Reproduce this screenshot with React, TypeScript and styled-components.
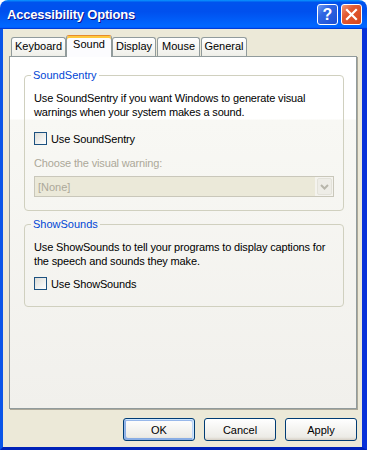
import React from 'react';
import styled, { createGlobalStyle } from 'styled-components';

const GlobalStyle = createGlobalStyle`
  html, body {
    margin: 0;
    padding: 0;
    background: #ffffff;
  }
  body {
    font-family: 'Liberation Sans', Arial, sans-serif;
    font-size: 11px;
    color: #000;
  }
`;

const tabs = [
  { label: 'Keyboard', width: 55, gap: 0 },
  { label: 'Sound', width: 46, gap: 0, active: true },
  { label: 'Display', width: 44, gap: 0 },
  { label: 'Mouse', width: 43, gap: 1 },
  { label: 'General', width: 46, gap: 1 },
];

const App = (): JSX.Element => {
  return (
    <>
      <GlobalStyle />
      <Window>
        <TitleBar>
          <Title>Accessibility Options</Title>
          <Controls>
            <CaptionButton type="button" $kind="help">?</CaptionButton>
            <CaptionButton type="button" $kind="close">
              <svg width="13" height="13" viewBox="0 0 13 13">
                <path d="M2 2 L11 11 M11 2 L2 11" stroke="#fff" strokeWidth="2.2" strokeLinecap="square" />
              </svg>
            </CaptionButton>
          </Controls>
        </TitleBar>

        <Body>
          <TabRow>
            {tabs.map((t) => (
              <Tab key={t.label} $w={t.width} $gap={t.gap} $active={t.active}>
                {t.label}
              </Tab>
            ))}
          </TabRow>

          <Panel>
            <Group $top={12} $bottom={13}>
              <Legend>SoundSentry</Legend>
              <Desc>
                Use SoundSentry if you want Windows to generate visual
                <br />
                warnings when your system makes a sound.
              </Desc>
              <CheckRow $top={13}>
                <CheckBox />
                <span>Use SoundSentry</span>
              </CheckRow>
              <DisabledLabel>Choose the visual warning:</DisabledLabel>
              <Combo>
                <ComboField>[None]</ComboField>
                <ComboButton>
                  <svg width="9" height="6" viewBox="0 0 9 6">
                    <path d="M1 1 L4.5 4.5 L8 1" fill="none" stroke="#b8b6ab" strokeWidth="2" />
                  </svg>
                </ComboButton>
              </Combo>
            </Group>

            <Group $top={7} $bottom={16}>
              <Legend>ShowSounds</Legend>
              <Desc>
                Use ShowSounds to tell your programs to display captions for
                <br />
                the speech and sounds they make.
              </Desc>
              <CheckRow $top={9}>
                <CheckBox />
                <span>Use ShowSounds</span>
              </CheckRow>
            </Group>
          </Panel>

          <ButtonRow>
            <Button type="button" $default>OK</Button>
            <Button type="button">Cancel</Button>
            <Button type="button">Apply</Button>
          </ButtonRow>
        </Body>
      </Window>
    </>
  );
};

const Window = styled.div`
  width: 367px;
  height: 450px;
  display: flex;
  flex-direction: column;
`;

const TitleBar = styled.div`
  height: 29px;
  flex: none;
  display: flex;
  align-items: center;
  padding: 0 5px 0 7px;
  box-sizing: border-box;
  border-radius: 8px 8px 0 0;
  background: linear-gradient(
    180deg,
    #0997ff,
    #0053ee 8%,
    #0050ee 40%,
    #0066ff 88%,
    #0066ff 93%,
    #005bff 95%,
    #003dd7 96%,
    #003dd7
  );
`;

const Title = styled.div`
  flex: 1;
  color: #fff;
  font-family: 'Liberation Sans', Arial, sans-serif;
  font-weight: bold;
  font-size: 13px;
  letter-spacing: -0.2px;
  text-shadow: 1px 1px #0f1089;
`;

const Controls = styled.div`
  display: flex;
  gap: 3px;
`;

const CaptionButton = styled.button<{ $kind: 'help' | 'close' }>`
  width: 21px;
  height: 21px;
  padding: 0;
  border: 1px solid #fff;
  border-radius: 3px;
  display: flex;
  align-items: center;
  justify-content: center;
  color: #fff;
  font-family: 'Liberation Sans', Arial, sans-serif;
  font-weight: bold;
  font-size: 16px;
  background: ${(p) =>
    p.$kind === 'close'
      ? 'linear-gradient(135deg, #f09a7c 0%, #e35a33 35%, #d6461b 100%)'
      : 'linear-gradient(135deg, #6f9bf2 0%, #2f66e3 35%, #1c4fd3 100%)'};
`;

const Body = styled.div`
  flex: 1;
  display: flex;
  flex-direction: column;
  background: #ece9d8;
  border-style: solid;
  border-width: 0 5px 3px 3px;
  border-color: #0842d8 #0831d9 #0022b8 #0a55e8;
  padding: 6px 5px 6px 6px;
  min-height: 0;
`;

const TabRow = styled.div`
  height: 21px;
  flex: none;
  display: flex;
  align-items: flex-end;
  padding-left: 2px;
  position: relative;
  z-index: 1;
`;

const Tab = styled.div<{ $w: number; $gap: number; $active?: boolean }>`
  width: ${(p) => p.$w}px;
  margin-left: ${(p) => p.$gap}px;
  box-sizing: border-box;
  height: ${(p) => (p.$active ? 22 : 19)}px;
  margin-bottom: ${(p) => (p.$active ? -1 : 0)}px;
  padding-top: 2px;
  line-height: 13px;
  text-align: center;
  border: 1px solid #919b9c;
  border-bottom: none;
  border-radius: 3px 3px 0 0;
  ${(p) =>
    p.$active
      ? `
    background: #fcfcfe;
    border-top-color: #e68b2c;
    box-shadow: inset 0 2px #ffc83c;
  `
      : `
    background: linear-gradient(180deg, #fff, #fafaf9 26%, #f0f0ea 95%, #ecebe5);
  `}
`;

const Panel = styled.div`
  flex: 1;
  display: flex;
  flex-direction: column;
  border: 1px solid #919b9c;
  box-shadow: 1px 1px 0 #aca899;
  padding-left: 14px;
  background: linear-gradient(
    180deg,
    #ffffff 0,
    #ffffff 62px,
    #f8f8f4 63px,
    #f1f0ec 100%
  );
`;

const Group = styled.fieldset<{ $top: number; $bottom: number }>`
  width: 320px;
  min-width: 0;
  box-sizing: border-box;
  margin: ${(p) => p.$top}px 0 0 0;
  padding: 0 0 ${(p) => p.$bottom}px 9px;
  border: 1px solid #d0d0bf;
  border-radius: 4px;
`;

const Legend = styled.legend`
  color: #0046d5;
  padding: 0 2px;
  margin-left: -3px;
  line-height: 13px;
`;

const Desc = styled.p`
  margin: 9px 0 0;
  line-height: 14px;
  letter-spacing: -0.15px;
`;

const CheckRow = styled.div<{ $top: number }>`
  margin-top: ${(p) => p.$top}px;
  display: flex;
  align-items: center;
  gap: 4px;
  height: 13px;
  letter-spacing: -0.15px;
`;

const CheckBox = styled.span`
  width: 13px;
  height: 13px;
  box-sizing: border-box;
  border: 1px solid #1c5180;
  background: linear-gradient(135deg, #dcdcd7 0%, #ffffff 100%);
`;

const DisabledLabel = styled.div`
  margin-top: 12px;
  line-height: 13px;
  color: #aca899;
  letter-spacing: -0.15px;
`;

const Combo = styled.div`
  margin-top: 6px;
  width: 300px;
  height: 21px;
  box-sizing: border-box;
  border: 1px solid #c9c7ba;
  background: #f4f3ee;
  display: flex;
  padding: 1px;
  gap: 2px;
`;

const ComboField = styled.div`
  flex: 1;
  background: #ebe9d9;
  color: #aca899;
  padding-left: 3px;
  display: flex;
  align-items: center;
  margin: -1px 0 -1px -1px;
`;

const ComboButton = styled.div`
  width: 15px;
  box-sizing: border-box;
  border: 1px solid #e3e2da;
  border-radius: 2px;
  background: #eeede7;
  display: flex;
  align-items: center;
  justify-content: center;
`;

const ButtonRow = styled.div`
  flex: none;
  display: flex;
  justify-content: flex-end;
  gap: 9px;
  margin-top: 9px;
`;

const Button = styled.button<{ $default?: boolean }>`
  width: 72px;
  height: 23px;
  padding: 0;
  box-sizing: border-box;
  border: 1px solid #003c74;
  border-radius: 3px;
  font-family: 'Liberation Sans', Arial, sans-serif;
  font-size: 11px;
  color: #000;
  background: linear-gradient(180deg, #fff, #ecebe6 86%, #d6d0c5);
  box-shadow: ${(p) =>
    p.$default
      ? 'inset -1px 1px #cee7ff, inset 1px 2px #98b8ea, inset -2px 2px #bcd4f6, inset 1px -1px #89ade4, inset 2px -2px #89ade4'
      : 'none'};
`;

export default App;
